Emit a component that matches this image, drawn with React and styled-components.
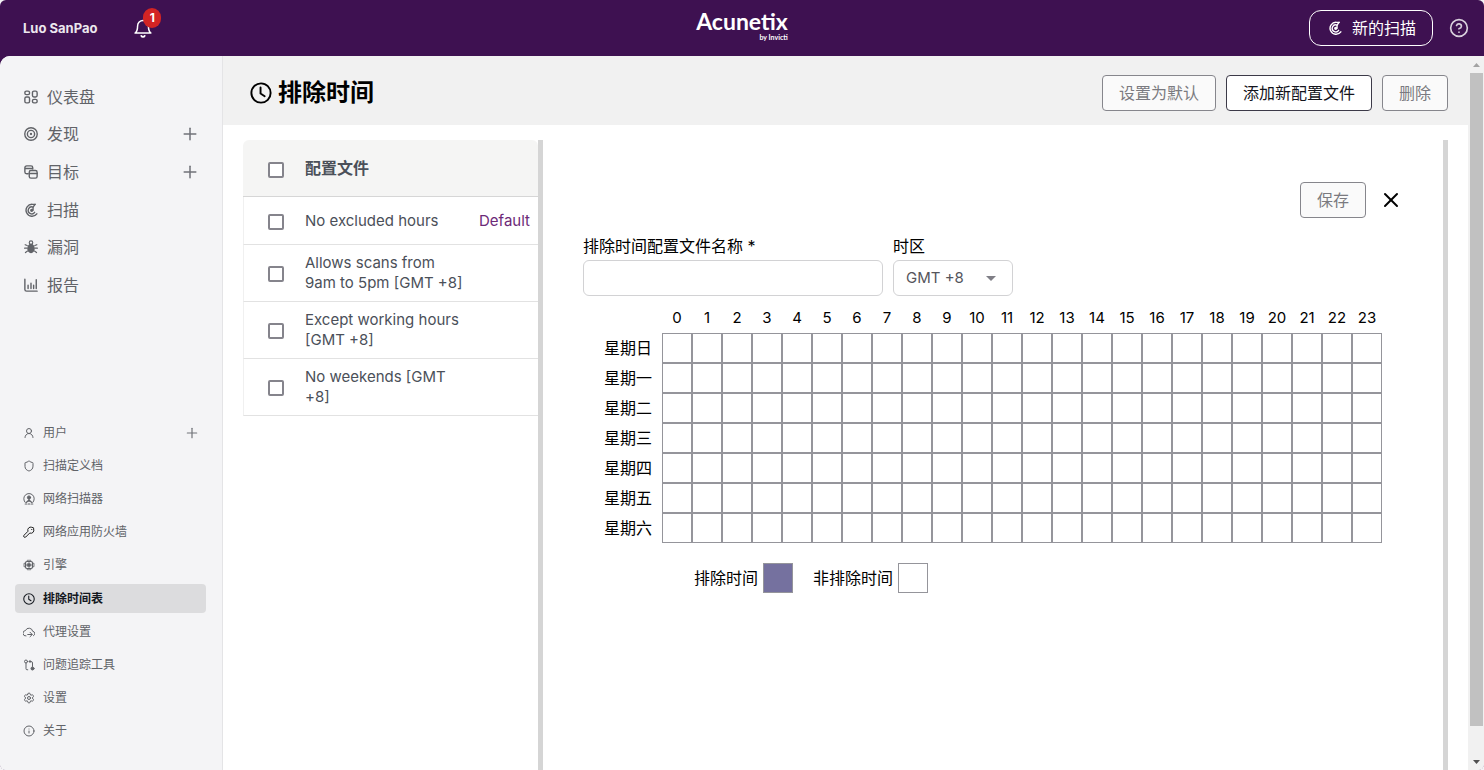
import React, { useState } from 'react';
import styled, { createGlobalStyle, css } from 'styled-components';
import { CircleHelp, Info, Plus, Settings, Shield, UserRound, X } from 'lucide-react';

const hours = Array.from({ length: 24 }, (_, i) => i);
const days = ['星期日', '星期一', '星期二', '星期三', '星期四', '星期五', '星期六'];

const profiles = [
    { id: 'none', name: 'No excluded hours', isDefault: true },
    { id: 'nine', name: 'Allows scans from 9am to 5pm [GMT +8]' },
    { id: 'working', name: 'Except working hours [GMT +8]' },
    { id: 'weekends', name: 'No weekends [GMT +8]' },
];

const Svg = ({ size = 14, children, ...rest }) => (
    <svg width={size} height={size} viewBox="0 0 24 24" fill="none" stroke="currentColor" strokeWidth="2" strokeLinecap="round" strokeLinejoin="round" aria-hidden="true" {...rest}>
        {children}
    </svg>
);

const BellIcon = () => (
    <Svg size={20} strokeWidth="1.8">
        <path d="M2.5 18h19c-2-1.5-3-4-3-8.500a6.500 6.500 0 0 0-13 0c0 4.500-1 7-3 8.500z" />
        <path d="M10 21.500c.8 1.600 3.200 1.600 4 0" strokeWidth="2.2" />
    </Svg>
);

const DashboardIcon = () => (
    <Svg strokeWidth="2.4">
        <rect x="1.5" y="2" width="8" height="6" rx="2.5" />
        <rect x="14.5" y="2" width="8" height="10" rx="2.5" />
        <rect x="1.5" y="12" width="8" height="10" rx="2.5" />
        <rect x="14.5" y="16" width="8" height="6" rx="2.5" />
    </Svg>
);

const DiscoveryIcon = () => (
    <Svg strokeWidth="2.4">
        <circle cx="12" cy="12" r="10.7" />
        <circle cx="12" cy="12" r="6.2" />
        <circle cx="12" cy="12" r="2" fill="currentColor" stroke="none" />
    </Svg>
);

const TargetsIcon = () => (
    <Svg strokeWidth="2.4">
        <path d="M7 15H4.500a3 3 0 0 1-3-3V4.500a3 3 0 0 1 3-3H12a3 3 0 0 1 3 3V7M1.500 6H15" />
        <rect x="9" y="9.500" width="13.500" height="13" rx="3" />
        <path d="M9 14.500h13.500" />
    </Svg>
);

const ScanIcon = ({ size = 14 }) => (
    <Svg size={size} strokeWidth="2.400">
        <path d="M19 2.300h-4.500A10.200 10.200 0 1 0 22 18.500" />
        <path d="M15.500 7a6 6 0 1 0 2.700 9" />
        <path d="M19 2.300 15.500 7v5.500" />
        <circle cx="13.200" cy="12.500" r="1.600" fill="currentColor" />
    </Svg>
);

const BugIcon = () => (
    <Svg>
        <ellipse cx="12" cy="14.500" rx="6.500" ry="8" fill="currentColor" stroke="none" />
        <circle cx="12" cy="4.500" r="3" />
        <path d="M5.500 9.500 2 8M5 14H1M6 19l-3.500 2.500M18.500 9.500 22 8M19 14h4M18 19l3.500 2.500" />
    </Svg>
);

const ReportsIcon = () => (
    <Svg strokeWidth="2.4">
        <path d="M1.500 2v17.500a3 3 0 0 0 3 3h18" />
        <path d="M7 12.500V18M12 9v9M16.500 12.500V18M21 3v15" />
    </Svg>
);

const NetworkScannerIcon = () => (
    <Svg size={12}>
        <path d="M4.500 19A10.500 10.500 0 1 1 19.500 19" />
        <circle cx="12" cy="9" r="3.200" fill="currentColor" />
        <path d="M12 12v5M12 14l-5 4.500M12 14l5 4.500" strokeWidth="2.4" />
        <path d="M4.500 22h3M10.500 22h3M16.500 22h3" strokeWidth="2.4" />
    </Svg>
);

const WafIcon = () => (
    <Svg size={12}>
        <path d="M21.500 6.500a6 6 0 0 1-8 7.500l-8 8a2.200 2.200 0 0 1-3.500-3.500l8-8a6 6 0 0 1 7.500-8l3 1z" />
        <path d="M17 6.500l1 1" />
    </Svg>
);

const EngineIcon = () => (
    <Svg size={12} strokeWidth="1.6">
        <rect x="5" y="5" width="14" height="14" rx="3" strokeWidth="2.4" />
        <rect x="9.500" y="9.500" width="5" height="5" fill="currentColor" />
        <path d="M8.500 5V2.500h7V5M8.500 19v2.500h7V19M5 8.500H2v7h3M19 8.500h3v7h-3M12 5v14M5 12h14" />
    </Svg>
);

const ClockIcon = ({ size = 12 }) => (
    <Svg size={size} strokeWidth="2.100">
        <circle cx="12" cy="12" r="10.500" />
        <path d="M11.500 6v6.500l4.500 3" />
    </Svg>
);

const ProxyIcon = () => (
    <Svg size={12}>
        <path d="M6 20a5.500 5.500 0 0 1-1-11 7.500 7.500 0 0 1 14.300 1.500A4.800 4.800 0 0 1 21 19.500" />
        <path d="M9.500 17H18M14 12.500l4.500 4.500-4.500 4.500" />
    </Svg>
);

const TrackerIcon = () => (
    <Svg size={12}>
        <circle cx="6" cy="5" r="3" />
        <path d="M6 8v11.500a2 2 0 0 0 2 2h1.500M13 5h3a3 3 0 0 1 3 3v7M14.500 2.500 12 5l2.500 2.500" />
        <circle cx="19" cy="19" r="3" fill="currentColor" />
    </Svg>
);

const mainMenu = [
    { label: '仪表盘', icon: <DashboardIcon /> },
    { label: '发现', icon: <DiscoveryIcon />, add: true },
    { label: '目标', icon: <TargetsIcon />, add: true },
    { label: '扫描', icon: <ScanIcon /> },
    { label: '漏洞', icon: <BugIcon /> },
    { label: '报告', icon: <ReportsIcon /> },
];

const settingsMenu = [
    { label: '用户', icon: <UserRound size={12} />, add: true },
    { label: '扫描定义档', icon: <Shield size={12} /> },
    { label: '网络扫描器', icon: <NetworkScannerIcon /> },
    { label: '网络应用防火墙', icon: <WafIcon />, dark: true },
    { label: '引擎', icon: <EngineIcon /> },
    { label: '排除时间表', icon: <ClockIcon />, active: true },
    { label: '代理设置', icon: <ProxyIcon /> },
    { label: '问题追踪工具', icon: <TrackerIcon /> },
    { label: '设置', icon: <Settings size={12} /> },
    { label: '关于', icon: <Info size={12} /> },
];

const App = () => {
    const [name, setName] = useState('');

    return (
        <Page>
            <GlobalStyle />
            <TopBar>
                <Account>
                    <UserName>Luo SanPao</UserName>
                    <Notifications aria-label="Notifications">
                        <BellIcon />
                        <Badge>1</Badge>
                    </Notifications>
                </Account>
                <Logo>
                    <LogoName>Acunetix</LogoName>
                    <LogoOwner>by Invicti</LogoOwner>
                </Logo>
                <TopActions>
                    <NewScan>
                        <ScanIcon />
                        新的扫描
                    </NewScan>
                    <HelpButton aria-label="Help">
                        <CircleHelp size={20} strokeWidth={2} />
                    </HelpButton>
                </TopActions>
            </TopBar>
            <Body>
                <Sidebar>
                    <MainMenu>
                        {mainMenu.map(item => (
                            <MenuItem key={item.label}>
                                <MenuLink href="#">{item.icon}{item.label}</MenuLink>
                                {item.add && <AddButton aria-label={item.label}><Plus size={20} strokeWidth={1.8} /></AddButton>}
                            </MenuItem>
                        ))}
                    </MainMenu>
                    <SettingsMenu>
                        {settingsMenu.map(item => (
                            <MenuItem key={item.label} $small $active={item.active}>
                                <MenuLink href="#" $small $active={item.active} $dark={item.dark}>{item.icon}{item.label}</MenuLink>
                                {item.add && <AddButton aria-label={item.label}><Plus size={16} strokeWidth={1.8} /></AddButton>}
                            </MenuItem>
                        ))}
                    </SettingsMenu>
                </Sidebar>
                <Main>
                    <PageHeader>
                        <PageTitle>
                            <ClockIcon size={22} />
                            排除时间
                        </PageTitle>
                        <ButtonGroup>
                            <Button disabled>设置为默认</Button>
                            <Button>添加新配置文件</Button>
                            <Button disabled>删除</Button>
                        </ButtonGroup>
                    </PageHeader>
                    <Content>
                        <ProfilePanel>
                            <ProfileTable>
                                <thead>
                                    <tr>
                                        <CheckHead><Checkbox id="all" /></CheckHead>
                                        <NameHead><label htmlFor="all">配置文件</label></NameHead>
                                        <StatusHead />
                                    </tr>
                                </thead>
                                <tbody>
                                    {profiles.map(profile => (
                                        <tr key={profile.id}>
                                            <CheckCell><Checkbox id={profile.id} /></CheckCell>
                                            <ProfileCell><label htmlFor={profile.id}>{profile.name}</label></ProfileCell>
                                            <StatusCell>{profile.isDefault && 'Default'}</StatusCell>
                                        </tr>
                                    ))}
                                </tbody>
                            </ProfileTable>
                        </ProfilePanel>
                        <Detail>
                            <DetailActions>
                                <Button disabled>保存</Button>
                                <CloseButton aria-label="Close"><X size={24} strokeWidth={2} /></CloseButton>
                            </DetailActions>
                            <Fields>
                                <Field>
                                    <FieldLabel htmlFor="profile-name">排除时间配置文件名称 *</FieldLabel>
                                    <TextInput id="profile-name" value={name} onChange={e => setName(e.target.value)} />
                                </Field>
                                <Field>
                                    <FieldLabel htmlFor="timezone">时区</FieldLabel>
                                    <SelectBox>
                                        <Select id="timezone" defaultValue="8">
                                            <option value="8">GMT +8</option>
                                        </Select>
                                        <Arrow width="10" height="5" viewBox="0 0 10 5" aria-hidden="true">
                                            <path d="M0 0h10L5 5z" fill="currentColor" />
                                        </Arrow>
                                    </SelectBox>
                                </Field>
                            </Fields>
                            <Schedule>
                                <thead>
                                    <tr>
                                        <td />
                                        {hours.map(hour => <Hour key={hour} scope="col">{hour}</Hour>)}
                                    </tr>
                                </thead>
                                <tbody>
                                    {days.map(day => (
                                        <tr key={day}>
                                            <Day scope="row">{day}</Day>
                                            {hours.map(hour => <Slot key={hour} />)}
                                        </tr>
                                    ))}
                                </tbody>
                            </Schedule>
                            <Legend>
                                <LegendItem>排除时间<Swatch $excluded /></LegendItem>
                                <LegendItem>非排除时间<Swatch /></LegendItem>
                            </Legend>
                        </Detail>
                    </Content>
                </Main>
                <ScrollBar aria-hidden="true">
                    <ScrollArrow><svg width="7" height="4" viewBox="0 0 7 4"><path d="M3.500 0 7 4H0z" fill="#a3a3a3" /></svg></ScrollArrow>
                    <ScrollTrack><ScrollThumb /></ScrollTrack>
                    <ScrollArrow><svg width="7" height="4" viewBox="0 0 7 4"><path d="M0 0h7L3.500 4z" fill="#505050" /></svg></ScrollArrow>
                </ScrollBar>
            </Body>
        </Page>
    );
};

export default App;

const GlobalStyle = createGlobalStyle`
    * {
        box-sizing: border-box;
    }

    body {
        margin: 0;
        background: #f4f4f6;
        color: #000;
        font-family: Inter, "Noto Sans CJK SC", sans-serif;
        font-size: 16px;
        line-height: 20px;
    }

    button, input, select {
        font: inherit;
        margin: 0;
    }

    svg {
        flex: none;
    }
`;

const Page = styled.div`
    display: flex;
    flex-direction: column;
    min-height: 100vh;
    background: #3e1151;
    border-radius: 6px;
    overflow: hidden;
`;

const TopBar = styled.header`
    display: grid;
    grid-template-columns: 1fr auto 1fr;
    align-items: center;
    height: 56px;
    padding: 0 15px 0 23px;
    color: #fff;
`;

const Account = styled.div`
    display: flex;
    align-items: center;
    gap: 36px;
`;

const UserName = styled.span`
    color: #ece7ee;
    font-size: 13px;
    font-weight: 700;
`;

const IconButton = styled.button`
    display: flex;
    padding: 0;
    border: 0;
    background: none;
    color: inherit;
    cursor: pointer;
`;

const Notifications = styled(IconButton)`
    position: relative;
`;

const Badge = styled.span`
    position: absolute;
    top: -10px;
    right: -8px;
    width: 18px;
    height: 20px;
    border-radius: 9px;
    background: #d32424;
    font-size: 12px;
    font-weight: 700;
`;

const Logo = styled.div`
    display: flex;
    flex-direction: column;
    align-items: flex-end;
    padding: 0 8px 6px 0;
`;

const LogoName = styled.span`
    font-family: Lato, sans-serif;
    font-size: 23px;
    font-weight: 700;
    line-height: 24px;
`;

const LogoOwner = styled.span`
    font-family: Lato, sans-serif;
    font-size: 7px;
    font-weight: 700;
    line-height: 8px;
`;

const TopActions = styled.div`
    display: flex;
    align-items: center;
    justify-content: flex-end;
    gap: 16px;
`;

const NewScan = styled.button`
    display: flex;
    align-items: center;
    gap: 10px;
    height: 36px;
    padding: 0 16px 0 18px;
    border: 1px solid #fff;
    border-radius: 12px;
    background: none;
    color: #fff;
    cursor: pointer;
`;

const HelpButton = styled(IconButton)`
    color: #d8cfdc;
`;

const Body = styled.div`
    display: flex;
    flex: 1;
    border-radius: 10px 0 0 0;
    background: #fff;
    overflow: hidden;
`;

const Sidebar = styled.nav`
    display: flex;
    flex: none;
    flex-direction: column;
    width: 223px;
    padding: 22px 16px 24px 15px;
    border-right: 1px solid #e4e4e6;
    background: #f4f4f6;
`;

const MainMenu = styled.ul`
    display: grid;
    grid-auto-rows: 1fr;
    height: 226px;
    margin: 0;
    padding: 0;
    list-style: none;
`;

const SettingsMenu = styled(MainMenu)`
    gap: 4px;
    height: 328px;
    margin-top: auto;
`;

const MenuItem = styled.li`
    display: flex;
    align-items: center;
    justify-content: space-between;
    padding: 0 6px 0 ${({ $small }) => ($small ? '8px' : '9px')};
    border-radius: 4px;
    background: ${({ $active }) => ($active ? '#dcdcde' : 'none')};
`;

const MenuLink = styled.a`
    display: flex;
    align-items: center;
    gap: 9px;
    color: #616368;
    font-size: 16px;
    text-decoration: none;

    ${({ $small }) => $small && css`
        gap: 8px;
        font-size: 12px;
    `}

    ${({ $active }) => $active && css`
        color: #14181f;
        font-weight: 700;
    `}

    svg {
        color: ${({ $dark }) => ($dark ? '#222' : 'inherit')};
    }
`;

const AddButton = styled(IconButton)`
    color: #707278;
`;

const Main = styled.main`
    display: flex;
    flex: 1;
    flex-direction: column;
    min-width: 0;
`;

const PageHeader = styled.div`
    display: flex;
    align-items: center;
    justify-content: space-between;
    height: 69px;
    padding: 4px 20px 0 27px;
    background: #f1f1f1;
`;

const PageTitle = styled.h1`
    display: flex;
    align-items: center;
    gap: 6px;
    margin: 0;
    font-size: 24px;
    line-height: 32px;
`;

const ButtonGroup = styled.div`
    display: flex;
    gap: 10px;
`;

const Button = styled.button`
    height: 36px;
    padding: 0 16px;
    border: 1px solid #3c3a48;
    border-radius: 4px;
    background: #fff;
    color: #14141c;
    cursor: pointer;

    &:disabled {
        border-color: #86868c;
        background: #fafafa;
        color: #7a7a80;
        cursor: default;
    }
`;

const Content = styled.div`
    display: flex;
    flex: 1;
    padding: 15px 20px 0;
`;

const ProfilePanel = styled.div`
    flex: none;
    width: 300px;
    border-right: 5px solid #d5d5d5;
`;

const ProfileTable = styled.table`
    width: 100%;
    border-spacing: 0;
    table-layout: fixed;
    color: #4b5059;
    font-size: 15px;
    text-align: left;
`;

const HeadCell = styled.th`
    height: 57px;
    padding: 0;
    border-bottom: 1px solid #d6d6d6;
    background: #f5f5f4;
    font-size: 16px;
`;

const CheckHead = styled(HeadCell)`
    width: 62px;
    padding: 4px 0 0 25px;
    border-top-left-radius: 6px;
`;

const NameHead = styled(HeadCell)`
    width: 162px;
`;

const StatusHead = styled(HeadCell)`
    border-top-right-radius: 6px;
`;

const Cell = styled.td`
    height: 48px;
    padding: 8px 0;
    border-bottom: 1px solid #e2e2e2;
`;

const CheckCell = styled(Cell)`
    padding: 10px 0 8px 24px;
    border-left: 1px solid #f0f0f0;
`;

const ProfileCell = styled(Cell)`
    padding-right: 2px;
`;

const StatusCell = styled(Cell)`
    padding-right: 8px;
    color: #6d2a78;
    text-align: right;
`;

const Checkbox = styled.input.attrs({ type: 'checkbox' })`
    display: block;
    width: 16px;
    height: 16px;
    border: 2px solid #85848c;
    border-radius: 2px;
    background: #fff;
    appearance: none;

    &:checked {
        background: #3e1151;
    }
`;

const Detail = styled.section`
    flex: 1;
    padding: 42px 40px;
    border-right: 5px solid #d5d5d5;
`;

const DetailActions = styled.div`
    display: flex;
    align-items: center;
    justify-content: flex-end;
    gap: 13px;
`;

const CloseButton = styled(IconButton)``;

const Fields = styled.div`
    display: flex;
    gap: 10px;
    margin-top: 18px;
`;

const Field = styled.div`
    display: flex;
    flex-direction: column;
    gap: 4px;
`;

const FieldLabel = styled.label`
    white-space: nowrap;
`;

const TextInput = styled.input`
    width: 300px;
    height: 36px;
    padding: 0 12px;
    border: 1px solid #d2d2d4;
    border-radius: 6px;
`;

const SelectBox = styled.div`
    position: relative;
    width: 120px;
`;

const Select = styled.select`
    width: 100%;
    height: 36px;
    padding: 0 12px;
    border: 1px solid #d2d2d4;
    border-radius: 6px;
    background: #fff;
    color: #55555c;
    font-size: 15px;
    appearance: none;
`;

const Arrow = styled.svg`
    position: absolute;
    top: 16px;
    right: 17px;
    color: #7f7e86;
    pointer-events: none;
`;

const Schedule = styled.table`
    width: 799px;
    margin-top: 7px;
    border-spacing: 0;
    table-layout: fixed;

    th, td {
        height: 30px;
        padding: 0;
        font-weight: 400;
    }
`;

const Hour = styled.th`
    width: 30px;
    font-size: 15px;
`;

const Day = styled.th`
    && {
        padding-right: 10px;
    }
    text-align: right;
`;

const Slot = styled.td`
    border: 1px solid #95959b;
`;

const Legend = styled.div`
    display: flex;
    gap: 20px;
    margin-top: 20px;
    padding-left: 111px;
`;

const LegendItem = styled.div`
    display: flex;
    align-items: center;
    gap: 5px;
`;

const Swatch = styled.span`
    width: 30px;
    height: 30px;
    border: 1px solid #95959b;
    background: ${({ $excluded }) => ($excluded ? '#75719f' : '#fff')};
`;

const ScrollBar = styled.div`
    display: flex;
    flex: none;
    flex-direction: column;
    width: 16px;
    padding: 0 1px 0 2px;
    background: #f1f1f1;
`;

const ScrollArrow = styled.div`
    display: flex;
    align-items: center;
    justify-content: center;
    height: 17px;
`;

const ScrollTrack = styled.div`
    flex: 1;
`;

const ScrollThumb = styled.div`
    height: 96%;
    background: #c1c1c1;
`;
